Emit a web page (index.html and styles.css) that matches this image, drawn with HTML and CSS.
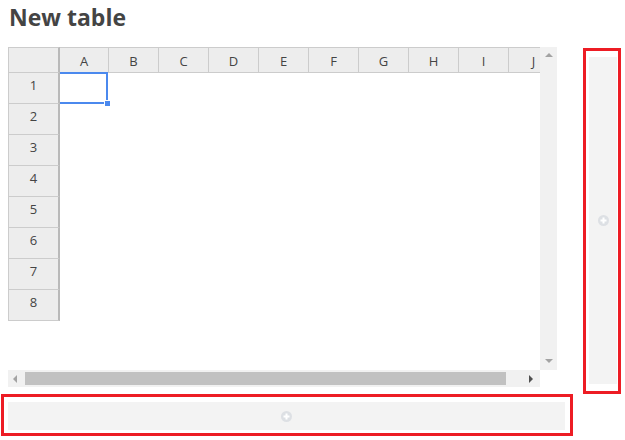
FILE: index.html
```html
<!DOCTYPE html>
<html lang="en">
<head>
<meta charset="utf-8">
<title>New table</title>
<link rel="stylesheet" href="styles.css">
</head>
<body>
<h1 class="title">New table</h1>
<div class="workspace">
  <div class="left">
    <div class="sheet">
      <div class="viewport">
        <div class="grid">
          <div class="corner"></div>
          <div class="colheads">
            <div class="colhead first">A</div>
            <div class="colhead">B</div>
            <div class="colhead">C</div>
            <div class="colhead">D</div>
            <div class="colhead">E</div>
            <div class="colhead">F</div>
            <div class="colhead">G</div>
            <div class="colhead">H</div>
            <div class="colhead">I</div>
            <div class="colhead">J</div>
          </div>
          <div class="rowheads">
            <div class="rowhead">1</div>
            <div class="rowhead">2</div>
            <div class="rowhead">3</div>
            <div class="rowhead">4</div>
            <div class="rowhead">5</div>
            <div class="rowhead">6</div>
            <div class="rowhead">7</div>
            <div class="rowhead">8</div>
          </div>
          <div class="cells">
            <div class="selection"></div>
            <div class="handle"></div>
          </div>
        </div>
      </div>
      <div class="vscroll">
        <span class="arrow up"></span>
        <span class="arrow down"></span>
      </div>
      <div class="hscroll">
        <span class="arrow left"></span>
        <span class="thumb"></span>
        <span class="arrow right"></span>
      </div>
      <div class="scorner"></div>
    </div>
    <div class="dropzone addrow">
      <div class="dropinner">
        <svg class="plus" width="11" height="11" viewBox="0 0 11 11"><circle cx="5.5" cy="5.5" r="5.5" fill="#dde0e4"/><path d="M5.5 2.5v6M2.5 5.5h6" stroke="#fff" stroke-width="2"/></svg>
      </div>
    </div>
  </div>
  <div class="dropzone addcol">
    <div class="dropinner">
      <svg class="plus" width="11" height="11" viewBox="0 0 11 11"><circle cx="5.5" cy="5.5" r="5.5" fill="#dde0e4"/><path d="M5.5 2.5v6M2.5 5.5h6" stroke="#fff" stroke-width="2"/></svg>
    </div>
  </div>
</div>
</body>
</html>
```

FILE: styles.css
```css
* { box-sizing: border-box; }

body {
  margin: 0;
  background: #fff;
  font-family: "Open Sans", "Liberation Sans", sans-serif;
}

.title {
  margin: 0;
  padding: 1px 0 0 9px;
  font-size: 23px;
  line-height: 33px;
  font-weight: 700;
  color: #444;
}

.workspace {
  display: flex;
  align-items: flex-start;
  gap: 10px;
  margin-top: 13px;
  padding-left: 1px;
}

.left {
  display: flex;
  flex-direction: column;
  width: 572px;
}

.sheet {
  margin-left: 7px;
  display: grid;
  grid-template-columns: 532px 17px;
  grid-template-rows: 323px 17px;
  width: 549px;
}

.viewport {
  overflow: hidden;
  position: relative;
  background: #fff;
}

.grid {
  display: grid;
  grid-template-columns: 52px max-content;
  grid-template-rows: 26px max-content;
  width: max-content;
}

.corner {
  background: #ededed;
  border: 1px solid #ccc;
  border-right: 2px solid #b9b9b9;
}

.colheads {
  display: flex;
}

.colhead {
  width: 50px;
  height: 26px;
  background: #ededed;
  border-top: 1px solid #ccc;
  border-bottom: 1px solid #ccc;
  border-right: 1px solid #ccc;
  text-align: center;
  font-size: 13px;
  padding-top: 2px;
  line-height: 22px;
  color: #444;
}

.colhead.first {
  width: 49px;
}

.rowheads {
  display: flex;
  flex-direction: column;
}

.rowhead {
  width: 52px;
  height: 31px;
  background: #ededed;
  border-left: 1px solid #ccc;
  border-bottom: 1px solid #ccc;
  border-right: 2px solid #b9b9b9;
  text-align: center;
  font-size: 13px;
  line-height: 24px;
  color: #444;
}

.cells {
  position: relative;
}

.selection {
  position: absolute;
  left: 0;
  top: -1px;
  width: 48px;
  height: 32px;
  border: 2px solid #4b89ee;
  border-left: none;
}

.handle {
  position: absolute;
  left: 44px;
  top: 27px;
  width: 7px;
  height: 7px;
  background: #4b89ee;
  border: 1px solid #fff;
}

.vscroll {
  background: #f1f1f1;
  display: flex;
  flex-direction: column;
  justify-content: space-between;
  align-items: center;
  padding: 6px 0 7px;
}

.hscroll {
  background: #f1f1f1;
  display: flex;
  align-items: center;
  padding: 0 4px 0 5px;
}

.scorner {
  background: #fff;
}

.arrow {
  width: 0;
  height: 0;
  display: block;
}

.arrow.up {
  border-left: 4px solid transparent;
  border-right: 4px solid transparent;
  border-bottom: 4px solid #a3a3a3;
}

.arrow.down {
  border-left: 4px solid transparent;
  border-right: 4px solid transparent;
  border-top: 4px solid #a3a3a3;
}

.arrow.left {
  border-top: 4px solid transparent;
  border-bottom: 4px solid transparent;
  border-right: 4px solid #a3a3a3;
}

.arrow.right {
  border-top: 4px solid transparent;
  border-bottom: 4px solid transparent;
  border-left: 4px solid #505050;
}

.thumb {
  display: block;
  width: 481px;
  height: 13px;
  background: #c1c1c1;
  margin-left: 8px;
  margin-right: 23px;
}

.dropzone {
  border: 3px solid #ed1c24;
  display: flex;
}

.dropinner {
  flex: 1;
  background: #f3f3f3;
  display: flex;
  align-items: center;
  justify-content: center;
}

.addrow {
  margin-top: 7px;
  height: 42px;
  padding: 5px 5px 3px 4px;
}

.addcol {
  margin-top: 1px;
  width: 38px;
  height: 346px;
  padding: 6px 1px 7px 3px;
}

.plus {
  display: block;
}
```
